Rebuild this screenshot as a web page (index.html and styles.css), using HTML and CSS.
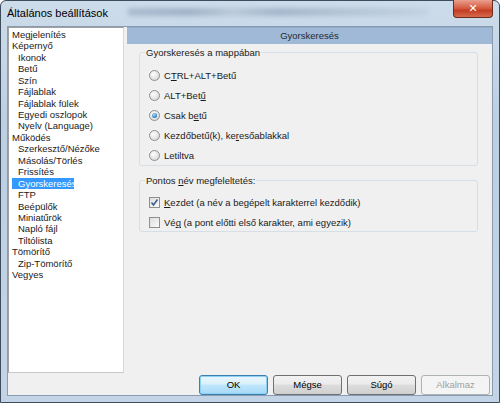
FILE: index.html
```html
<!DOCTYPE html>
<html>
<head>
<meta charset="utf-8">
<link rel="stylesheet" href="styles.css">
</head>
<body>
<div class="window">
  <div class="titlebar">
    <span class="title">Általános beállítások</span>
    <span class="blur"></span>
    <span class="close">✕</span>
  </div>
  <div class="client">
    <div class="main">
      <ul class="tree">
        <li>Megjelenítés</li>
        <li>Képernyő</li>
        <li class="l1">Ikonok</li>
        <li class="l1">Betű</li>
        <li class="l1">Szín</li>
        <li class="l1">Fájlablak</li>
        <li class="l1">Fájlablak fülek</li>
        <li class="l1">Egyedi oszlopok</li>
        <li class="l1">Nyelv (Language)</li>
        <li>Működés</li>
        <li class="l1">Szerkesztő/Nézőke</li>
        <li class="l1">Másolás/Törlés</li>
        <li class="l1">Frissítés</li>
        <li class="l1"><span class="sel">Gyorskeresés</span></li>
        <li class="l1">FTP</li>
        <li class="l1">Beépülők</li>
        <li class="l1">Miniatűrök</li>
        <li class="l1">Napló fájl</li>
        <li class="l1">Tiltólista</li>
        <li>Tömörítő</li>
        <li class="l1">Zip-Tömörítő</li>
        <li>Vegyes</li>
      </ul>
      <div class="panel">
        <div class="header">Gyorskeresés</div>
        <fieldset class="group g1">
          <legend>Gyorskeresés a mappában</legend>
          <div class="opt"><span class="radio"></span><span>C<u>T</u>RL+ALT+Betű</span></div>
          <div class="opt"><span class="radio"></span><span>ALT+Bet<u>ű</u></span></div>
          <div class="opt"><span class="radio on"></span><span>Csak b<u>e</u>tű</span></div>
          <div class="opt"><span class="radio"></span><span>Kezdőbetű(k), ke<u>r</u>esőablakkal</span></div>
          <div class="opt"><span class="radio"></span><span>Letiltva</span></div>
        </fieldset>
        <fieldset class="group g2">
          <legend>Pontos <u>n</u>év megfeleltetés:</legend>
          <div class="opt"><span class="check on"><svg viewBox="0 0 11 11" width="11" height="11"><path d="M2.5 5.5 L4.5 8 L8.5 2.5" fill="none" stroke="#3a5f8f" stroke-width="1.6"/></svg></span><span><u>K</u>ezdet (a név a begépelt karakterrel kezdődik)</span></div>
          <div class="opt"><span class="check"></span><span>Vé<u>g</u> (a pont előtti első karakter, ami egyezik)</span></div>
        </fieldset>
      </div>
    </div>
    <div class="buttons">
      <button class="btn default">OK</button>
      <button class="btn">Mégse</button>
      <button class="btn">Súgó</button>
      <button class="btn disabled">Alkalmaz</button>
    </div>
  </div>
</div>
</body>
</html>
```
FILE: styles.css
```css
* { box-sizing: border-box; }
html, body { margin: 0; padding: 0; }
body { width: 500px; height: 403px; overflow: hidden; background: #fff; font-family: "Liberation Sans", Arial, sans-serif; }

.window {
  width: 500px; height: 403px;
  background: linear-gradient(#cddcea, #bccfe3 30%, #c3d4e6);
  border: 1px solid #3f4c5c;
  border-radius: 6px 6px 0 0;
  display: flex; flex-direction: column;
}
.titlebar {
  height: 25px; position: relative;
  display: flex; align-items: center;
  padding-left: 6px;
}
.title { font-size: 11px; color: #000; margin-top: -1px; }
.blur {
  width: 300px; height: 8px; margin-left: 20px; margin-top: -2px;
  background: linear-gradient(90deg, #9fb1c6 0, #8da2ba 20%, #b3c2d4 35%, #93a7bf 50%, #a8b9cc 70%, #c0cfdf 100%);
  filter: blur(2px); opacity: .7;
}
.close {
  position: absolute; right: 6px; top: -1px;
  width: 40px; height: 18px;
  background: linear-gradient(#e9a08f, #d4583c 50%, #c23c22 60%, #d66a4c);
  border: 1px solid #6d2a1d; border-top: none;
  border-radius: 0 0 4px 4px;
  color: #fff; font-size: 11px; font-weight: bold;
  display: flex; align-items: center; justify-content: center;
  font-family: "DejaVu Sans", sans-serif;
}
.client {
  margin: 0 6px 6px 6px;
  height: 371px;
  background: #f0f0f0;
  border: 1px solid #8a9bb0;
  padding: 0;
  display: flex; flex-direction: column;
}
.main { display: flex; height: 346px; }
.tree {
  list-style: none; margin: 0; padding: 1px 0 0 2px;
  width: 116px; height: 346px;
  background: #fff;
  border: 1px solid #a0a0a0;
  border-right-color: #d8d8d8; border-bottom-color: #c8c8c8;
  font-size: 9.5px; line-height: 11.43px; color: #1a1a1a;
}
.tree li { padding-left: 1px; white-space: nowrap; }
.tree li.l1 { padding-left: 7px; }
.sel { background: #3399ff; color: #fff; padding: 0 0 0 6px; margin-left: -6px; display: inline-block; width: 62px; }

.panel { width: 365px; margin-left: 3px; }
.header {
  height: 17px;
  background: #a0b9d6;
  border-top: 1px solid #8eabc9;
  font-size: 9.5px; line-height: 15px; text-align: center; color: #1b2a3b;
}
.group {
  margin: 0 14px 0 12px;
  border: 1px solid #d5dfe5;
  border-radius: 3px;
  padding: 2px 0 0 9px;
  font-size: 9.5px; color: #1a1a1a;
}
.group legend { padding: 0 1px; margin-left: -4px; }
.g1 { margin-top: 3px; height: 119px; padding-top: 8px; }
.g2 { margin-top: 9px; height: 57px; padding-top: 7px; }
.opt { height: 20px; display: flex; align-items: center; white-space: nowrap; }
.radio {
  width: 11px; height: 11px; border-radius: 50%;
  border: 1px solid #8f8f8f;
  background: radial-gradient(circle at 40% 35%, #fff, #e2e2e2 60%, #cfcfcf);
  margin-right: 4px; position: relative; flex: none;
}
.radio.on::after {
  content: ""; position: absolute; left: 2px; top: 2px;
  width: 5px; height: 5px; border-radius: 50%;
  background: radial-gradient(circle at 40% 35%, #a9d8f5, #2e7fc0 70%, #1a5a94);
}
.check {
  width: 11px; height: 11px;
  border: 1px solid #8f8f8f;
  background: linear-gradient(135deg, #dedede, #fbfbfb);
  margin-right: 4px; flex: none; position: relative;
}
.check svg { position: absolute; left: -1px; top: -1px; }

.buttons {
  display: flex; justify-content: flex-end; gap: 5px;
  margin-top: 2px; padding-right: 2px;
}
.btn {
  width: 69px; height: 20px;
  border: 1px solid #707070; border-radius: 3px;
  background: linear-gradient(#f2f2f2 0, #ebebeb 45%, #dddddd 50%, #cfcfcf 100%);
  font-family: "Liberation Sans", Arial, sans-serif; font-size: 9.5px; color: #000;
  padding: 0;
}
.btn.default {
  border-color: #3c7fb1;
  background: linear-gradient(#eaf6fd 0, #d9f0fc 45%, #bee6fd 50%, #a7d9f5 100%);
  box-shadow: inset 0 0 0 1px #8fd1f3;
}
.btn.disabled { border-color: #adb2b5; background: #f4f4f4; color: #a0a0a0; }
```
